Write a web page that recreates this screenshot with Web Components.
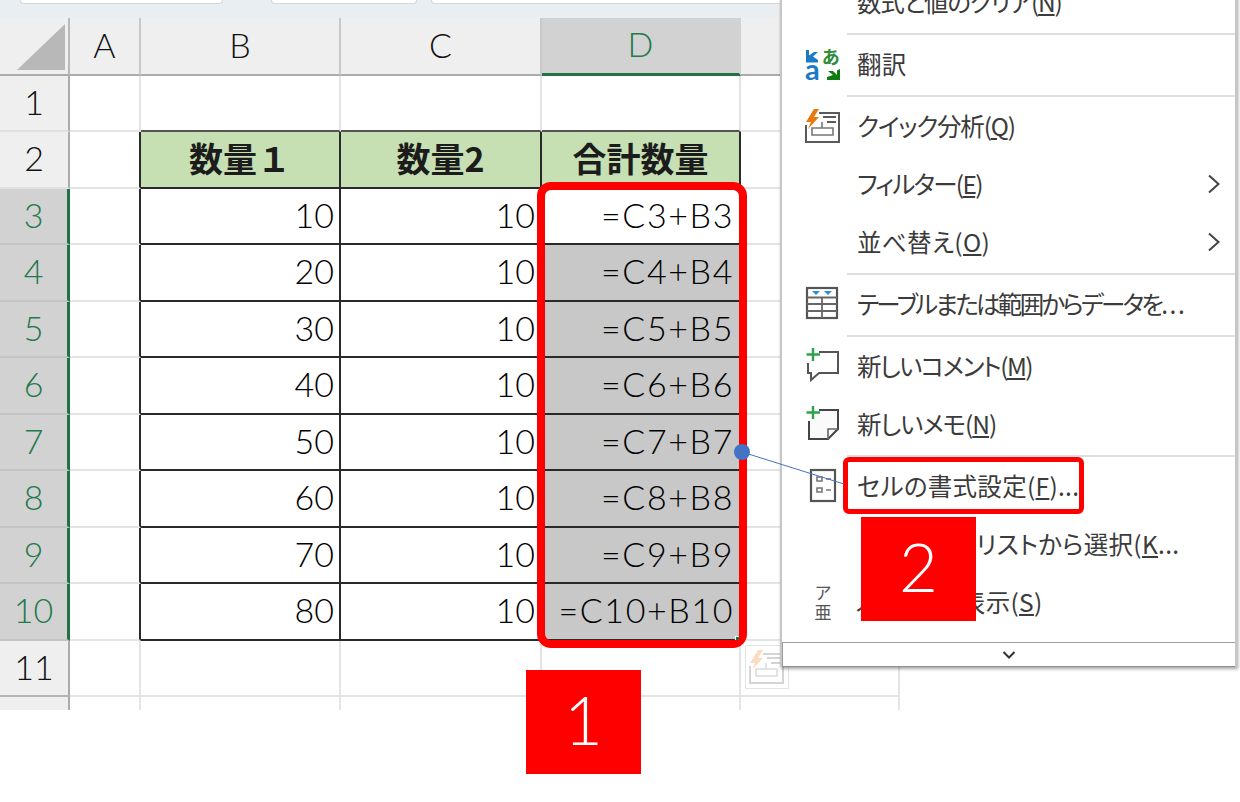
<!DOCTYPE html>
<html lang="ja">
<head>
<meta charset="utf-8">
<title>Excel</title>
<style>
  html, body { margin: 0; background: #fff; overflow: hidden; }
  body { width: 1240px; height: 802px; }
</style>
</head>
<body>
<xl-stage>
  <xl-tabs-edge></xl-tabs-edge>
  <xl-sheet></xl-sheet>

  <xl-quick-ghost></xl-quick-ghost>

  <xl-menu>
    <xl-menu-item style="letter-spacing:-1.200px">数式と値のクリア(<u>N</u>)</xl-menu-item>
    <xl-menu-line></xl-menu-line>
    <xl-menu-item icon="translate">翻訳</xl-menu-item>
    <xl-menu-line></xl-menu-line>
    <xl-menu-item icon="quick" style="letter-spacing:-1.200px">クイック分析(<u>Q</u>)</xl-menu-item>
    <xl-menu-item arrow style="letter-spacing:-1.700px">フィルター(<u>E</u>)</xl-menu-item>
    <xl-menu-item arrow>並べ替え(<u>O</u>)</xl-menu-item>
    <xl-menu-line></xl-menu-line>
    <xl-menu-item icon="table" style="letter-spacing:-2.700px">テーブルまたは範囲からデータを<span style="letter-spacing:1.500px">...</span></xl-menu-item>
    <xl-menu-line></xl-menu-line>
    <xl-menu-item icon="comment" style="letter-spacing:-1.500px">新しいコメント(<u>M</u>)</xl-menu-item>
    <xl-menu-item icon="memo" style="letter-spacing:-1px">新しいメモ(<u>N</u>)</xl-menu-item>
    <xl-menu-line></xl-menu-line>
    <xl-menu-item icon="format">セルの書式設定(<u>F</u>)...</xl-menu-item>
    <xl-menu-item><span style="letter-spacing:-5.400px">ドロップダウン</span> リストから選択(<u>K</u>...</xl-menu-item>
    <xl-menu-item icon="furigana"><span style="letter-spacing:-2.200px">ふりがなの</span>表示(<u>S</u>)</xl-menu-item>
  </xl-menu>

  <xl-outline style="left:537px;top:182px;width:210px;height:466px;--w:8px;--r:14px"></xl-outline>
  <xl-outline style="left:843px;top:457px;width:241px;height:57px;--w:5px;--r:6px"></xl-outline>
  <xl-fill-handle></xl-fill-handle>
  <xl-connector></xl-connector>
  <xl-badge style="left:526px;top:670px">1</xl-badge>
  <xl-badge style="left:861px;top:517px">2</xl-badge>
</xl-stage>

<script>
const latinFont = 'Lato, "Noto Sans CJK JP", sans-serif';
const cjkFont = '"Noto Sans CJK JP", sans-serif';

const icons = {
  translate: `<svg width="36" height="36" viewBox="0 0 36 36">
    <path d="M1 4h3v5.500L9 6l4 0-5 4.500 5 3.500v2.500H1z" fill="#1b7ac4"/>
    <text x="0" y="34" font-family="Lato, sans-serif" font-size="29" font-weight="700" fill="#1b7ac4">a</text>
    <text x="17" y="18" font-family="'Noto Sans CJK JP', sans-serif" font-size="18" font-weight="700" fill="#2e8b37">あ</text>
    <path d="M35 34V23l-3 1.500V29l-4-4h-5l5 4-6 2v3z" fill="#107c10"/>
  </svg>`,
  quick: `<svg width="36" height="36" viewBox="0 0 36 36">
    <path d="M14 5H34V34H1V17M18 9H31M22 14H31" fill="none" stroke="#5a5a5a" stroke-width="2"/>
    <path d="M7 20H28V27H7z M17 14V20" fill="none" stroke="#777" stroke-width="1.600"/>
    <path d="M9 1 1 14 6 14 3 21 14 9H9L14 1z" fill="#e8790f"/>
  </svg>`,
  table: `<svg width="36" height="36" viewBox="0 0 36 36">
    <rect x="2" y="2" width="30" height="30" fill="#fff" stroke="#555" stroke-width="2.200"/>
    <path d="M2 11.500H32M2 18H32M2 25H32M17 11.500V32" fill="none" stroke="#666" stroke-width="1.800"/>
    <path d="M7 5h8l-4 4zM19 5h8l-4 4z" fill="#2a8fd0"/>
  </svg>`,
  comment: `<svg width="36" height="36" viewBox="0 0 36 36">
    <path d="M14 4H33V25H14L6 32V25H3V15" fill="none" stroke="#555" stroke-width="2"/>
    <path d="M8 0V13M1.500 6.500H15" stroke="#2ea24a" stroke-width="2.400"/>
  </svg>`,
  memo: `<svg width="36" height="36" viewBox="0 0 36 36">
    <path d="M14 4H33V23L23 33H4V15" fill="#fafafa" stroke="#444" stroke-width="2"/>
    <path d="M33 23H23V33" fill="none" stroke="#666" stroke-width="1.600"/>
    <path d="M8 0V13M1.500 6.500H15" stroke="#2ea24a" stroke-width="2.400"/>
  </svg>`,
  format: `<svg width="36" height="36" viewBox="0 0 36 36">
    <rect x="6" y="2" width="24" height="31" fill="#fff" stroke="#555" stroke-width="2.200"/>
    <path d="M12 9h5v4h-5zM12 20h5v4h-5z" fill="#fff" stroke="#777" stroke-width="1.600"/>
    <path d="M21 11h5M21 22h5" stroke="#777" stroke-width="1.600"/>
  </svg>`
};

class XlStage extends HTMLElement {
  constructor() {
    super();
    const root = this.attachShadow({mode: 'open'});
    root.innerHTML = `<style>
      :host{display:block;position:relative;width:1240px;height:802px;overflow:hidden;}
    </style><slot></slot>`;
  }
}

class XlTabsEdge extends HTMLElement {
  constructor() {
    super();
    const root = this.attachShadow({mode: 'open'});
    root.innerHTML = `<style>
      :host{display:flex;height:18px;width:900px;background:#e9eef2;box-sizing:border-box;padding-left:20px;gap:48px;}
      span{display:block;height:3px;background:#fff;border:1px solid #d6d6d6;border-top:0;border-radius:0 0 6px 6px;}
      .a{width:201px;}
      .b{width:144px;margin-right:-34px;}
      .c{width:460px;}
    </style><span class="a"></span><span class="b"></span><span class="c"></span>`;
  }
}

class XlSheet extends HTMLElement {
  constructor() {
    super();
    this.__createDom();
  }

  __createDom() {
    const root = this.attachShadow({mode: 'open'});
    root.innerHTML = `<style>
      :host{display:block;width:900px;font-family:${latinFont};font-weight:300;color:#000;}
      #grid{
        display:grid;
        grid-template-columns:70px 71px 200px 201px 199px 159px;
        grid-template-rows:58px 56px 57px 56px 57px 56px 57px 56px 57px 56px 57px 56px 13px;
      }
      .c{box-sizing:border-box;border-right:2px solid #e4e4e4;border-bottom:2px solid #e4e4e4;background:#fff;padding-bottom:3px;
        display:flex;align-items:center;justify-content:flex-end;font-size:34px;line-height:1;white-space:nowrap;min-width:0;}
      .hd{background:#efefef;justify-content:center;font-size:34px;color:#111;border-right-color:#c9c9c9;border-bottom-color:#e0e0e0;}
      .col{border-bottom:2px solid #ababab;}
      .row{border-right:2px solid #ababab;}
      .corner{position:relative;border-right:2px solid #b8b8b8;border-bottom:2px solid #ababab;}
      .corner svg{position:absolute;left:17px;top:6px;}
      .hd.sel{background:#d2d2d2;color:#1f7a4c;}
      .col.sel{border-bottom:3px solid #217346;border-right-color:#d2d2d2;}
      .row.sel{border-right:3px solid #217346;border-bottom-color:#c4c4c4;}
      .row.last{border-bottom-color:#b4b4b4;}
      .t{border-right-color:#2a2a2a;border-bottom-color:#2a2a2a;}
      .tl{border-right-color:#2a2a2a;}
      .tt{border-bottom-color:#555;}
      .title{background:#c6e0b4;justify-content:center;font-family:${cjkFont};font-weight:700;font-size:34px;color:#1c1c1c;}
      .b{padding-right:5px;}
      .k{padding-right:5px;}
      .d{padding-right:5px;letter-spacing:1.600px;}
      .g{background:#c8c8c8;}
      .end{border-bottom:0;border-right-width:2px;}
    </style><div id="grid"></div>`;
    const grid = root.querySelector('#grid');
    const cols = ['A', 'B', 'C', 'D', ''];
    let html = `<div class="c hd corner"><svg width="48" height="46"><path d="M48 0V46H0z" fill="#b8b8b8"/></svg></div>`;
    cols.forEach((name) => {
      html += `<div class="c hd col${name === 'D' ? ' sel' : ''}">${name}</div>`;
    });
    for (let r = 1; r <= 12; r++) {
      html += this.__renderRow(r);
    }
    grid.innerHTML = html;
  }

  __renderRow(r) {
    const inTable = r >= 2 && r <= 10;
    const body = r >= 3 && r <= 10;
    const end = r === 12 ? ' end' : '';
    let rowCls = 'c hd row' + end;
    if (body) rowCls += ' sel';
    if (r === 11) rowCls += ' last';
    let out = `<div class="${rowCls}">${r === 12 ? '' : r}</div>`;
    out += `<div class="c${inTable ? ' tl' : ''}${end}"></div>`;
    if (r === 2) {
      out += `<div class="c t title">数量１</div><div class="c t title">数量2</div><div class="c t title">合計数量</div>`;
    } else if (body) {
      const shade = r > 3 ? ' g' : '';
      out += `<div class="c t b">${(r - 2) * 10}</div>`;
      out += `<div class="c t k">10</div>`;
      out += `<div class="c t d${shade}">=C${r}+B${r}</div>`;
    } else {
      const top = r === 1 ? ' tt' : '';
      out += `<div class="c${top}${end}"></div><div class="c${top}${end}"></div><div class="c${top}${end}"></div>`;
    }
    out += `<div class="c${end}"></div>`;
    return out;
  }
}

class XlMenu extends HTMLElement {
  constructor() {
    super();
    const root = this.attachShadow({mode: 'open'});
    root.innerHTML = `<style>
      :host{position:absolute;left:780px;top:-25px;width:457px;height:692px;box-sizing:border-box;
        background:#fff;border-left:2px solid #c6c6c6;border-right:2px solid #c6c6c6;
        box-shadow:1px 2px 3px rgba(0,0,0,.35);
        display:flex;flex-direction:column;font-family:${cjkFont};color:#3b3b3b;}
      #items{flex:1;}
      #more{height:23px;border-top:1px solid #9d9d9d;border-bottom:1px solid #8f8f8f;border-left:1px solid #9d9d9d;
        display:flex;align-items:center;justify-content:center;box-sizing:content-box;}
    </style>
    <div id="items"><slot></slot></div>
    <div id="more"><svg width="14" height="8" viewBox="0 0 14 8"><path d="M1.500 1 7 6.500 12.500 1" fill="none" stroke="#333" stroke-width="2"/></svg></div>`;
  }
}

class XlMenuItem extends HTMLElement {
  constructor() {
    super();
    this.attachShadow({mode: 'open'});
  }

  connectedCallback() {
    const icon = this.getAttribute('icon');
    let iconHtml = icons[icon] || '';
    if (icon === 'furigana') {
      iconHtml = `<div class="furi"><span>ア</span><span>亜</span></div>`;
    }
    const arrow = this.hasAttribute('arrow')
      ? `<svg class="arrow" width="14" height="20" viewBox="0 0 14 20"><path d="M2 1.500 11.500 10 2 18.500" fill="none" stroke="#444" stroke-width="2"/></svg>`
      : '';
    this.shadowRoot.innerHTML = `<style>
      :host{display:flex;align-items:center;box-sizing:border-box;height:58px;padding-bottom:5px;font-size:24.500px;font-feature-settings:"palt";letter-spacing:.3px;white-space:nowrap;}
      #icon{flex:none;width:75px;padding-left:23px;box-sizing:border-box;display:flex;align-items:center;height:36px;}
      #text{flex:1;min-width:0;}
      .arrow{flex:none;margin-right:14px;}
      .furi{display:flex;flex-direction:column;align-items:center;width:36px;font-size:17px;line-height:20px;color:#555;letter-spacing:0;}
    </style><div id="icon">${iconHtml}</div><div id="text"><slot></slot></div>${arrow}`;
  }
}

class XlMenuLine extends HTMLElement {
  constructor() {
    super();
    const root = this.attachShadow({mode: 'open'});
    root.innerHTML = `<style>
      :host{display:block;height:2px;margin:0 0 2px 65px;background:#dedede;}
    </style>`;
  }
}

class XlQuickGhost extends HTMLElement {
  constructor() {
    super();
    const root = this.attachShadow({mode: 'open'});
    root.innerHTML = `<style>
      :host{position:absolute;left:745px;top:645px;width:44px;height:44px;box-sizing:border-box;
        border:1px solid #dfe6df;background:#fff;display:flex;align-items:center;justify-content:center;}
      svg{opacity:.25;}
    </style>${icons.quick}`;
  }
}

class XlConnector extends HTMLElement {
  constructor() {
    super();
    const root = this.attachShadow({mode: 'open'});
    root.innerHTML = `<style>
      :host{position:absolute;left:730px;top:440px;width:130px;height:60px;}
      svg{display:block;}
    </style>
    <svg width="130" height="60">
      <path d="M12 12 114 44" stroke="#4472c4" stroke-width="1"/>
      <circle cx="12" cy="12" r="8" fill="#4472c4"/>
    </svg>`;
  }
}

class XlOutline extends HTMLElement {
  constructor() {
    super();
    const root = this.attachShadow({mode: 'open'});
    root.innerHTML = `<style>
      :host{position:absolute;box-sizing:border-box;border:var(--w) solid #f00;border-radius:var(--r);}
    </style>`;
  }
}

class XlFillHandle extends HTMLElement {
  constructor() {
    super();
    const root = this.attachShadow({mode: 'open'});
    root.innerHTML = `<style>
      :host{position:absolute;left:735px;top:636px;width:3px;height:3px;background:#217346;border:solid #fff;border-width:1px 0 0 1px;}
    </style>`;
  }
}

class XlBadge extends HTMLElement {
  constructor() {
    super();
    const root = this.attachShadow({mode: 'open'});
    root.innerHTML = `<style>
      :host{position:absolute;box-sizing:border-box;width:115px;height:104px;padding-bottom:6px;background:#f00;color:#fff;
        display:flex;align-items:center;justify-content:center;font-family:Lato,sans-serif;font-weight:300;font-size:67px;line-height:1;}
    </style><slot></slot>`;
  }
}

window.customElements.define('xl-stage', XlStage);
window.customElements.define('xl-tabs-edge', XlTabsEdge);
window.customElements.define('xl-sheet', XlSheet);
window.customElements.define('xl-menu', XlMenu);
window.customElements.define('xl-menu-item', XlMenuItem);
window.customElements.define('xl-menu-line', XlMenuLine);
window.customElements.define('xl-quick-ghost', XlQuickGhost);
window.customElements.define('xl-connector', XlConnector);
window.customElements.define('xl-outline', XlOutline);
window.customElements.define('xl-fill-handle', XlFillHandle);
window.customElements.define('xl-badge', XlBadge);
</script>
</body>
</html>
